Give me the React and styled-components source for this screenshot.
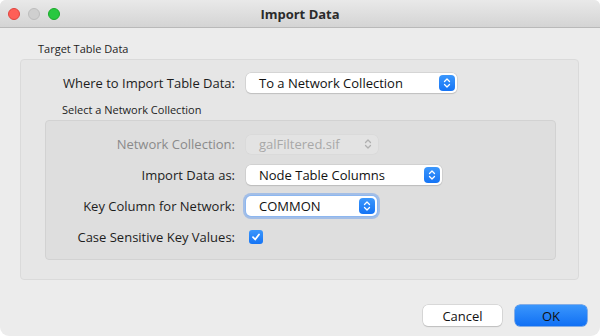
import React from 'react';
import styled, { createGlobalStyle } from 'styled-components';

const GlobalStyle = createGlobalStyle`
  * {
    margin: 0;
    padding: 0;
    box-sizing: border-box;
  }
  body {
    font-family: "Open Sans", "Liberation Sans", sans-serif;
    font-size: 13px;
    color: #1d1d1d;
    background: #ffffff;
    width: 600px;
    height: 336px;
    overflow: hidden;
  }
`;

const Window = styled.div`
  width: 600px;
  height: 336px;
  background: #ececec;
  border-radius: 6px 6px 9px 9px;
  overflow: hidden;
  display: flex;
  flex-direction: column;
`;

const TitleBar = styled.div`
  height: 28px;
  flex: none;
  position: relative;
  display: flex;
  align-items: center;
  justify-content: center;
  background: linear-gradient(#e9e9e9, #d4d4d4);
  border-bottom: 1px solid #b9b9b9;
`;

const Lights = styled.div`
  position: absolute;
  left: 8px;
  top: 8px;
  display: flex;
  gap: 8px;
`;

const Light = styled.span`
  width: 12px;
  height: 12px;
  border-radius: 50%;
  background: ${p => p.color};
  border: 0.5px solid ${p => p.edge};
`;

const Title = styled.div`
  font-weight: 700;
  font-size: 13px;
  color: #2b2b2b;
`;

const Body = styled.div`
  display: flex;
  flex-direction: column;
  padding: 14px 21px 0 20px;
`;

const GroupTitle = styled.div`
  font-size: 11px;
  line-height: 14px;
  color: #1d1d1d;
  padding-left: ${p => p.indent || 0}px;
  margin-bottom: 3px;
`;

const Panel = styled.div`
  background: ${p => (p.inner ? '#dedede' : '#e6e6e6')};
  border: 1px solid ${p => (p.inner ? '#d2d2d2' : '#dadada')};
  border-radius: 4px;
  display: flex;
  flex-direction: column;
`;

const OuterPanel = styled(Panel)`
  height: 221px;
  padding: 13px 22px 19px 24px;
`;

const InnerPanel = styled(Panel)`
  flex: 1;
  padding: 13px 0 0 0;
  gap: 11px;
`;

const Row = styled.div`
  display: grid;
  grid-template-columns: ${p => p.labelWidth}px auto;
  column-gap: 11px;
  align-items: center;
  height: 20px;
  margin-bottom: ${p => p.after || 0}px;
`;

const Label = styled.div`
  text-align: right;
  white-space: nowrap;
  color: ${p => (p.disabled ? '#8a8a8a' : '#1d1d1d')};
`;

const Select = styled.div`
  width: ${p => p.width}px;
  height: ${p => (p.disabled ? 19 : 20)}px;
  display: flex;
  align-items: center;
  justify-content: space-between;
  padding: 0 2px 0 13px;
  border-radius: 5px;
  background: ${p => (p.disabled ? '#e3e3e3' : '#ffffff')};
  box-shadow: ${p =>
    p.focused
      ? '0 0 0 1px #8db7f0, 0 0 0 3px rgba(90,150,240,0.45)'
      : p.disabled
      ? '0 0 0 0.5px #d6d6d6'
      : '0 0 0 0.5px #c4c4c4, 0 1px 1px rgba(0,0,0,0.18)'};
  color: ${p => (p.disabled ? '#a8a8a8' : '#111')};
  white-space: nowrap;
`;

const Stepper = styled.span`
  width: 16px;
  height: 16px;
  border-radius: 4px;
  display: flex;
  align-items: center;
  justify-content: center;
  background: ${p => (p.disabled ? 'transparent' : 'linear-gradient(#3b97fc, #1574f5)')};
`;

const Check = styled.span`
  width: 14px;
  height: 14px;
  margin-left: 3px;
  border-radius: 3px;
  background: linear-gradient(#3b97fc, #1574f5);
  display: flex;
  align-items: center;
  justify-content: center;
`;

const Footer = styled.div`
  display: flex;
  justify-content: flex-end;
  gap: 13px;
  padding: 25px 13px 0 0;
`;

const Button = styled.div`
  width: ${p => p.width}px;
  height: 21px;
  border-radius: 5px;
  display: flex;
  align-items: center;
  justify-content: center;
  color: #111;
  background: ${p => (p.primary ? 'linear-gradient(#3a96fc, #1170f4)' : '#ffffff')};
  box-shadow: ${p =>
    p.primary ? '0 0 0 0.5px #1a6fe0' : '0 0 0 0.5px #c4c4c4, 0 1px 1px rgba(0,0,0,0.2)'};
`;

const Arrows = ({ color }) => (
  <svg width="8" height="12" viewBox="0 0 8 12">
    <path d="M1.5 4.5 L4 2 L6.5 4.5 M1.5 7.5 L4 10 L6.5 7.5" fill="none" stroke={color} strokeWidth="1.3" strokeLinecap="round" strokeLinejoin="round" />
  </svg>
);

const Dropdown = ({ width, value, disabled, focused }) => (
  <Select width={width} disabled={disabled} focused={focused}>
    <span>{value}</span>
    <Stepper disabled={disabled}>
      <Arrows color={disabled ? '#b0b0b0' : '#ffffff'} />
    </Stepper>
  </Select>
);

export default function App() {
  return (
    <Window>
      <GlobalStyle />
      <TitleBar>
        <Lights>
          <Light color="#fe5f57" edge="#e0443e" />
          <Light color="#cfcfcf" edge="#bdbdbd" />
          <Light color="#28c840" edge="#1aab29" />
        </Lights>
        <Title>Import Data</Title>
      </TitleBar>
      <Body>
        <GroupTitle indent={18}>Target Table Data</GroupTitle>
        <OuterPanel>
          <Row labelWidth={190} after={10}>
            <Label>Where to Import Table Data:</Label>
            <Dropdown width={211} value="To a Network Collection" />
          </Row>
          <GroupTitle indent={17}>Select a Network Collection</GroupTitle>
          <InnerPanel inner>
            <Row labelWidth={189}>
              <Label disabled>Network Collection:</Label>
              <Dropdown width={132} value="galFiltered.sif" disabled />
            </Row>
            <Row labelWidth={189}>
              <Label>Import Data as:</Label>
              <Dropdown width={196} value="Node Table Columns" />
            </Row>
            <Row labelWidth={189}>
              <Label>Key Column for Network:</Label>
              <Dropdown width={131} value="COMMON" focused />
            </Row>
            <Row labelWidth={189}>
              <Label>Case Sensitive Key Values:</Label>
              <Check>
                <svg width="10" height="10" viewBox="0 0 10 10">
                  <path d="M2 5.2 L4.2 7.5 L8 2.5" fill="none" stroke="#fff" strokeWidth="1.8" strokeLinecap="round" strokeLinejoin="round" />
                </svg>
              </Check>
            </Row>
          </InnerPanel>
        </OuterPanel>
      </Body>
      <Footer>
        <Button width={79}>Cancel</Button>
        <Button width={72} primary>OK</Button>
      </Footer>
    </Window>
  );
}
